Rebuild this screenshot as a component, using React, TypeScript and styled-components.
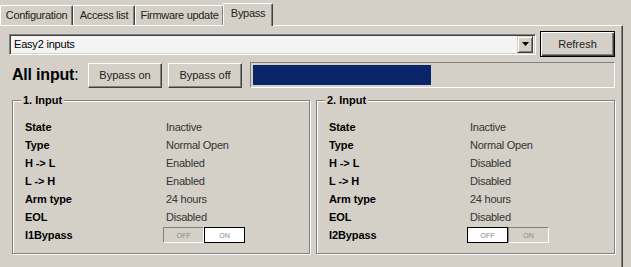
import { createGlobalStyle } from 'styled-components';
import styled from 'styled-components';

const GlobalStyle = createGlobalStyle`
  html, body {
    margin: 0;
    padding: 0;
    background: #d4d0c8;
  }
  body {
    font-family: 'Liberation Sans', Arial, sans-serif;
    font-size: 11px;
    color: #000;
  }
`;

type InputRow = { label: string; value: string };

const tabs = [
  { title: 'Configuration', width: 73 },
  { title: 'Access list', width: 62 },
  { title: 'Firmware update', width: 89 },
  { title: 'Bypass', width: 50, active: true },
];

const inputs: { title: string; bypass: string; on: boolean; rows: InputRow[] }[] = [
  {
    title: '1. Input',
    bypass: 'I1Bypass',
    on: true,
    rows: [
      { label: 'State', value: 'Inactive' },
      { label: 'Type', value: 'Normal Open' },
      { label: 'H -> L', value: 'Enabled' },
      { label: 'L -> H', value: 'Enabled' },
      { label: 'Arm type', value: '24 hours' },
      { label: 'EOL', value: 'Disabled' },
    ],
  },
  {
    title: '2. Input',
    bypass: 'I2Bypass',
    on: false,
    rows: [
      { label: 'State', value: 'Inactive' },
      { label: 'Type', value: 'Normal Open' },
      { label: 'H -> L', value: 'Disabled' },
      { label: 'L -> H', value: 'Disabled' },
      { label: 'Arm type', value: '24 hours' },
      { label: 'EOL', value: 'Disabled' },
    ],
  },
];

const progress = 49.6;

const App = () => {
  return (
    <Sty.Window>
      <GlobalStyle />
      <Sty.TabStrip>
        {tabs.map((t) => (
          <Sty.Tab key={t.title} $width={t.width} $active={!!t.active}>
            {t.title}
          </Sty.Tab>
        ))}
      </Sty.TabStrip>
      <Sty.Panel>
        <Sty.TopRow>
          <Sty.Combo>
            <span>Easy2 inputs</span>
            <Sty.ComboButton>
              <svg width='7' height='4' viewBox='0 0 7 4'>
                <path d='M0 0h7L3.5 4z' fill='#000' />
              </svg>
            </Sty.ComboButton>
          </Sty.Combo>
          <Sty.DefaultButton>Refresh</Sty.DefaultButton>
        </Sty.TopRow>
        <Sty.AllRow>
          <Sty.AllLabel>
            All input<span>:</span>
          </Sty.AllLabel>
          <Sty.Button>Bypass on</Sty.Button>
          <Sty.Button>Bypass off</Sty.Button>
          <Sty.Progress>
            <Sty.ProgressFill style={{ width: `${progress}%` }} />
          </Sty.Progress>
        </Sty.AllRow>
        <Sty.Groups>
          {inputs.map((g, i) => (
            <Sty.Group key={g.title} $width={i === 0 ? 298 : 299}>
              <legend>{g.title}</legend>
              <Sty.Rows>
                {g.rows.map((r) => (
                  <Sty.Row key={r.label}>
                    <Sty.Label>{r.label}</Sty.Label>
                    <Sty.Value>{r.value}</Sty.Value>
                  </Sty.Row>
                ))}
                <Sty.Row>
                  <Sty.Label>{g.bypass}</Sty.Label>
                  <Sty.Toggle>
                    <Sty.ToggleHalf $selected={!g.on}>OFF</Sty.ToggleHalf>
                    <Sty.ToggleHalf $selected={g.on}>ON</Sty.ToggleHalf>
                  </Sty.Toggle>
                </Sty.Row>
              </Sty.Rows>
            </Sty.Group>
          ))}
        </Sty.Groups>
      </Sty.Panel>
    </Sty.Window>
  );
};

const Sty = {
  Window: styled.div`
    width: 631px;
    height: 267px;
    overflow: hidden;
    background: #d4d0c8;
  `,
  TabStrip: styled.div`
    display: flex;
    align-items: flex-end;
    height: 25px;
    position: relative;
    z-index: 1;
  `,
  Tab: styled.div<{ $width: number; $active: boolean }>`
    box-sizing: border-box;
    width: ${({ $width }) => $width}px;
    height: ${({ $active }) => ($active ? 23 : 20)}px;
    margin-left: ${({ $active }) => ($active ? -1 : 0)}px;
    margin-bottom: ${({ $active }) => ($active ? -1 : 0)}px;
    padding-bottom: ${({ $active }) => ($active ? 5 : 1)}px;
    display: flex;
    align-items: center;
    justify-content: center;
    background: #d4d0c8;
    border-top: 1px solid #fff;
    border-left: 1px solid #fff;
    border-right: 1px solid #404040;
    border-radius: 2px 2px 0 0;
    box-shadow: inset -1px 0 0 #808080;
    white-space: nowrap;
    letter-spacing: -0.3px;
    color: #222;
  `,
  Panel: styled.div`
    box-sizing: border-box;
    width: 623px;
    height: 242px;
    border-top: 1px solid #fff;
    border-right: 1px solid #404040;
    box-shadow: inset -1px 0 0 #808080;
    padding-top: 5px;
  `,
  TopRow: styled.div`
    display: flex;
    align-items: center;
    height: 26px;
    padding-left: 9px;
    gap: 4px;
  `,
  Combo: styled.div`
    box-sizing: border-box;
    width: 527px;
    height: 21px;
    display: flex;
    align-items: center;
    justify-content: space-between;
    padding: 2px 2px 2px 4px;
    background: #f4f4f4;
    border-top: 1px solid #808080;
    border-left: 1px solid #808080;
    border-right: 1px solid #fff;
    border-bottom: 1px solid #fff;
    box-shadow: inset 1px 1px 0 #404040, inset -1px -1px 0 #d4d0c8;
    letter-spacing: -0.2px;
  `,
  ComboButton: styled.div`
    box-sizing: border-box;
    width: 16px;
    height: 17px;
    display: flex;
    align-items: center;
    justify-content: center;
    background: #d4d0c8;
    border-top: 1px solid #d4d0c8;
    border-left: 1px solid #d4d0c8;
    border-right: 1px solid #404040;
    border-bottom: 1px solid #404040;
    box-shadow: inset 1px 1px 0 #fff, inset -1px -1px 0 #808080;
  `,
  DefaultButton: styled.button`
    box-sizing: border-box;
    width: 75px;
    height: 26px;
    padding: 0 0 1px;
    font: inherit;
    color: #222;
    background: #d4d0c8;
    border: 1px solid #000;
    box-shadow: inset 1px 1px 0 #fff, inset -1px -1px 0 #404040,
      inset -2px -2px 0 #808080;
  `,
  AllRow: styled.div`
    display: flex;
    align-items: center;
    height: 26px;
    margin-top: 5px;
    padding-left: 12px;
  `,
  AllLabel: styled.div`
    width: 76px;
    font-size: 16px;
    font-weight: bold;
    letter-spacing: -0.2px;
    padding-bottom: 1px;

    span {
      font-weight: normal;
    }
  `,
  Button: styled.button`
    box-sizing: border-box;
    width: 74px;
    height: 25px;
    margin-right: 6px;
    padding: 0 0 1px;
    font: inherit;
    color: #222;
    background: #d4d0c8;
    border-top: 1px solid #fff;
    border-left: 1px solid #fff;
    border-right: 1px solid #404040;
    border-bottom: 1px solid #404040;
    box-shadow: inset -1px -1px 0 #808080;
  `,
  Progress: styled.div`
    box-sizing: border-box;
    width: 365px;
    height: 26px;
    margin-left: 2px;
    padding: 2px;
    border-top: 1px solid #808080;
    border-left: 1px solid #808080;
    border-right: 1px solid #fff;
    border-bottom: 1px solid #fff;
  `,
  ProgressFill: styled.div`
    height: 100%;
    background: #0a246a;
  `,
  Groups: styled.div`
    display: flex;
    gap: 6px;
    padding-left: 12px;
    margin-top: 6px;
  `,
  Group: styled.fieldset<{ $width: number }>`
    box-sizing: border-box;
    width: ${({ $width }) => $width}px;
    height: 160px;
    margin: 0;
    padding: 0 0 0 12px;
    border: 1px solid #808080;
    box-shadow: inset 1px 1px 0 #fff, 1px 1px 0 #fff;

    legend {
      margin-left: -4px;
      padding: 0 2px;
      font-weight: bold;
      background: #d4d0c8;
      line-height: 13px;
    }
  `,
  Rows: styled.div`
    display: flex;
    flex-direction: column;
    padding-top: 11px;
  `,
  Row: styled.div`
    display: grid;
    grid-template-columns: 141px 1fr;
    align-items: center;
    height: 18px;
  `,
  Label: styled.div`
    font-weight: bold;
    letter-spacing: -0.1px;
  `,
  Value: styled.div`
    color: #333;
    letter-spacing: -0.25px;
  `,
  Toggle: styled.div`
    display: flex;
    margin-left: -3px;
    height: 16px;
  `,
  ToggleHalf: styled.div<{ $selected: boolean }>`
    box-sizing: border-box;
    width: 41px;
    height: 16px;
    display: flex;
    align-items: center;
    justify-content: center;
    font-size: 7px;
    color: #8a8a8a;
    background: ${({ $selected }) => ($selected ? '#fff' : '#d4d0c8')};
    border: 1px solid;
    border-color: ${({ $selected }) =>
      $selected ? '#000' : '#808080 #fff #fff #808080'};
  `,
};

export default App;
